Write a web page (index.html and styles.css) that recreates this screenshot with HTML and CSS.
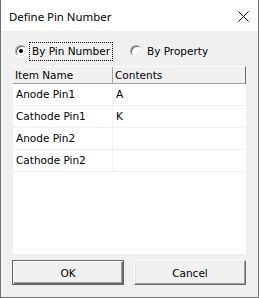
FILE: index.html
```html
<!doctype html>
<html lang="en">
    <head>
        <meta charset="UTF-8" />
        <title>Define Pin Number</title>
        <link rel="stylesheet" href="styles.css">
    </head>
    <body>
        <div class="window">
            <div class="titlebar">
                <span class="title">Define Pin Number</span>
                <svg class="close" width="11" height="11" viewBox="0 0 11 11">
                    <path d="M0.5 0.5 L10.5 10.5 M10.5 0.5 L0.5 10.5" stroke="#000" stroke-width="1" fill="none" />
                </svg>
            </div>
            <div class="content">
                <div class="radios">
                    <label class="radio">
                        <span class="circle checked"></span>
                        <span class="caption focus">By Pin Number</span>
                    </label>
                    <label class="radio">
                        <span class="circle"></span>
                        <span class="caption">By Property</span>
                    </label>
                </div>

                <div class="list">
                    <div class="header">
                        <div class="col">Item Name</div>
                        <div class="col">Contents</div>
                    </div>
                    <div class="row"><div class="cell">Anode Pin1</div><div class="cell">A</div></div>
                    <div class="row"><div class="cell">Cathode Pin1</div><div class="cell">K</div></div>
                    <div class="row"><div class="cell">Anode Pin2</div><div class="cell"></div></div>
                    <div class="row"><div class="cell">Cathode Pin2</div><div class="cell"></div></div>
                </div>

                <div class="buttons">
                    <button class="btn default">OK</button>
                    <button class="btn">Cancel</button>
                </div>
            </div>
        </div>
    </body>
</html>
```

FILE: styles.css
```css
body {
    margin: 0;
    font-family: "DejaVu Sans", Verdana, sans-serif;
    font-size: 10.5px;
    color: #000;
    background: #fff;
}
.window {
    width: 259px;
    height: 298px;
    box-sizing: border-box;
    border: 1px solid #707070;
    border-top: none;
    display: flex;
    flex-direction: column;
}
.titlebar {
    height: 31px;
    flex: none;
    background: #fff;
    display: flex;
    align-items: center;
    justify-content: space-between;
    padding: 0 9px 0 8px;
}
.title {
    font-family: "Noto Sans", "Open Sans", sans-serif;
    font-size: 11.4px;
    margin-top: 1px;
}
.close {
    display: block;
    margin-top: 1px;
}
.content {
    flex: 1;
    background: #f0f0f0;
    padding: 11px 12px 0;
}
.radios {
    display: flex;
    align-items: center;
    height: 18px;
    gap: 17px;
    padding-left: 2px;
}
.radio {
    display: flex;
    align-items: center;
    gap: 2px;
}
.circle {
    width: 12px;
    height: 12px;
    box-sizing: border-box;
    border-radius: 50%;
    border: 1px solid;
    border-color: #a0a0a0 #fff #fff #a0a0a0;
    background: #fff;
    box-shadow: inset 1px 1px 0 #696969, inset -1px -1px 0 #e3e3e3;
    position: relative;
}
.circle.checked::after {
    content: "";
    position: absolute;
    left: 3px;
    top: 3px;
    width: 4px;
    height: 4px;
    border-radius: 50%;
    background: #000;
}
.caption {
    padding: 1px 2px 2px;
    border: 1px dotted transparent;
    line-height: 14px;
}
.caption.focus {
    border-color: #000;
}
.list {
    margin-top: 6px;
    height: 188px;
    background: #fff;
}
.header {
    display: grid;
    grid-template-columns: 100px 1fr;
    height: 18px;
    box-sizing: border-box;
    background: #f0f0f0;
    border-top: 1px solid #fff;
    border-bottom: 1px solid #a0a0a0;
    border-right: 1px solid #696969;
}
.col {
    padding: 0 2px;
    line-height: 16px;
}
.col:first-child {
    border-right: 1px solid #a0a0a0;
    box-shadow: 1px 0 0 #fff;
}
.row {
    display: grid;
    grid-template-columns: 100px 1fr;
    height: 22px;
    box-sizing: border-box;
    border-bottom: 1px solid #f0f0f0;
}
.cell {
    padding: 0 3px;
    line-height: 21px;
}
.cell:first-child {
    border-right: 1px solid #f0f0f0;
}
.buttons {
    display: flex;
    gap: 10px;
    margin: 6px 0 0 -1px;
}
.btn {
    width: 112px;
    height: 25px;
    font-family: inherit;
    font-size: inherit;
    color: #000;
    background: #f0f0f0;
    border: 1px solid;
    border-color: #fff #696969 #696969 #fff;
    box-shadow: inset -1px -1px 0 #a0a0a0, inset 1px 1px 0 #e3e3e3;
    padding: 0;
}
.btn.default {
    border: 1px solid #646464;
    box-shadow: inset 1px 1px 0 #fff, inset -1px -1px 0 #696969, inset -2px -2px 0 #a0a0a0;
}
```
